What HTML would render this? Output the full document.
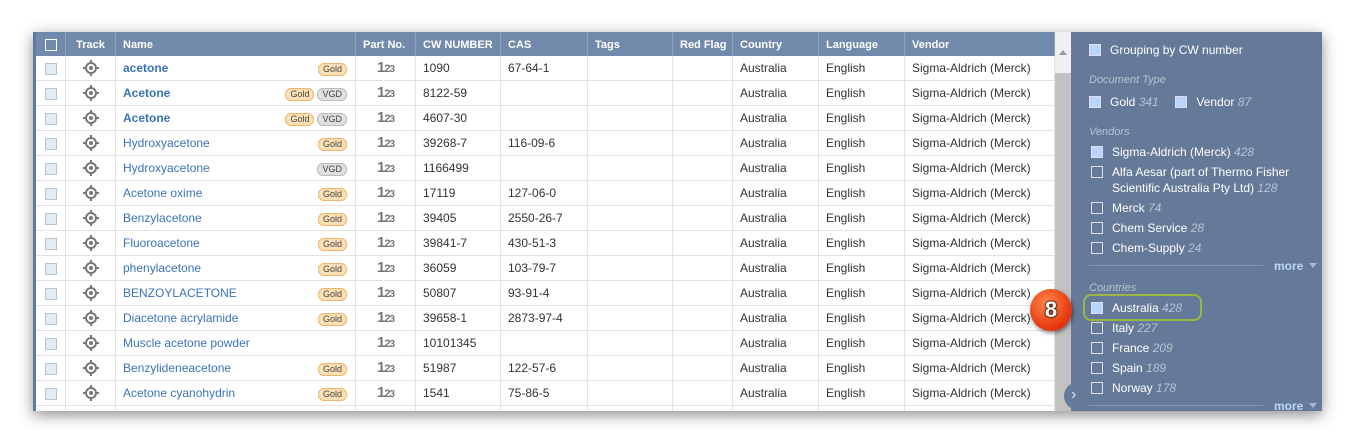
<!DOCTYPE html>
<html><head><style>
*{box-sizing:border-box;margin:0;padding:0}
body{width:1354px;height:444px;background:#fff;font-family:"Liberation Sans",Arial,sans-serif;font-size:12px;position:relative;overflow:hidden}
#wrap{position:absolute;left:33px;top:32px;width:1289px;height:379px;box-shadow:0 4px 14px rgba(0,0,0,.45);background:#fff;overflow:hidden}
#lb{position:absolute;left:0;top:0;width:3px;height:379px;background:#5f7aa3}
table{position:absolute;left:3px;top:0;border-collapse:separate;border-spacing:0;table-layout:fixed;width:1019px}
th{background:#7189aa;color:#fff;font-weight:bold;font-size:11px;height:24px;text-align:left;padding-left:7px;border-right:1px solid #8da1be;white-space:nowrap;padding-top:1px}
td{height:25px;border-right:1px solid #e2e2e2;border-bottom:1px solid #e2e2e2;color:#333;padding:0 0 0 7px;white-space:nowrap;font-size:12px;position:relative;line-height:14px}
.cb{display:inline-block;width:12px;height:12px;border:1px solid #b8c4d0;background:#e4ecf3;vertical-align:middle}
th .cb{border-color:#fff;background:transparent}
.c{text-align:center;padding-left:0}
.nm{color:#3b73b8}
.b{font-weight:bold}
.badges{position:absolute;right:8px;top:5px}
.g,.v{display:inline-block;font-size:9px;line-height:11px;padding:0 4px;border-radius:6px;margin-left:3px}
.g{background:#fde0b5;border:1px solid #f0b56a;color:#444}
.v{background:#e0e0e0;border:1px solid #bbb;color:#444}
.pn{font-weight:bold;color:#777;font-size:15px;letter-spacing:-1px;padding-top:2px}
.pn small{font-size:11px}
#sb{position:absolute;left:1022px;top:0;width:16px;height:379px;background:#c2c2c2}
#sb .tr{position:absolute;left:0;top:0;width:16px;height:41px;background:#f0f0f0}
#sb .tr:after{content:"";position:absolute;left:4px;top:18px;border:4px solid transparent;border-bottom:5px solid #999;border-top:0}
#side{position:absolute;left:1038px;top:0;width:251px;height:379px;background:#647a98;color:#fff;font-size:12px}
.si{position:absolute;left:18px;white-space:nowrap}
.si .cb{width:12px;height:12px;border:1px solid #dde;background:transparent;margin-right:9px;vertical-align:-2px}
.si .cb.on{background:#b9d5fb}
.hd{color:#b7c3d4;font-style:italic;font-size:11px}
.n{color:#b7c3d4;font-style:italic}
.hr{position:absolute;left:18px;width:174px;border-top:1px solid #8195b1}
.more{position:absolute;left:203px;color:#bcd6f5;font-weight:bold;font-size:12px}
.more:after{content:"";display:inline-block;margin-left:6px;border:4px solid transparent;border-top:5px solid #a8b9cf;vertical-align:-2px}
</style></head><body>
<div id="wrap">
<div id="lb"></div>
<table>
<colgroup><col style="width:30px"><col style="width:50px"><col style="width:240px"><col style="width:60px"><col style="width:85px"><col style="width:87px"><col style="width:85px"><col style="width:60px"><col style="width:86px"><col style="width:86px"><col style="width:150px"></colgroup>
<tr><th class="c"><span class="cb"></span></th><th class="c">Track</th><th>Name</th><th>Part No.</th><th>CW NUMBER</th><th>CAS</th><th>Tags</th><th>Red Flag</th><th>Country</th><th>Language</th><th>Vendor</th></tr>
</table>
<div id="sb"><div class="tr"></div></div>
<div id="side">
<div class="si" style="top:11px;font-size:12px"><span class="cb on"></span>Grouping by CW number</div>
<div class="si hd" style="top:42px">Document Type</div>
<div class="si" style="top:63px"><span class="cb on"></span>Gold <span class="n">341</span> &nbsp;&nbsp;&nbsp; <span class="cb on"></span>Vendor <span class="n">87</span></div>
<div class="si hd" style="top:94px">Vendors</div>
<div class="si" style="top:113px;left:20px"><span class="cb on"></span>Sigma-Aldrich (Merck) <span class="n">428</span></div>
<div class="si" style="top:133px;left:20px"><span class="cb"></span>Alfa Aesar (part of Thermo Fisher</div>
<div class="si" style="top:149px;left:41px">Scientific Australia Pty Ltd) <span class="n">128</span></div>
<div class="si" style="top:169px;left:20px"><span class="cb"></span>Merck <span class="n">74</span></div>
<div class="si" style="top:189px;left:20px"><span class="cb"></span>Chem Service <span class="n">28</span></div>
<div class="si" style="top:209px;left:20px"><span class="cb"></span>Chem-Supply <span class="n">24</span></div>
<div class="hr" style="top:233px"></div><div class="more" style="top:227px">more</div>
<div class="si hd" style="top:250px">Countries</div>
<div style="position:absolute;left:12px;top:262px;width:119px;height:27px;border:2px solid #98b843;border-radius:8px"></div>
<div class="si" style="top:269px;left:20px"><span class="cb on"></span>Australia <span class="n">428</span></div>
<div class="si" style="top:289px;left:20px"><span class="cb"></span>Italy <span class="n">227</span></div>
<div class="si" style="top:309px;left:20px"><span class="cb"></span>France <span class="n">209</span></div>
<div class="si" style="top:329px;left:20px"><span class="cb"></span>Spain <span class="n">189</span></div>
<div class="si" style="top:349px;left:20px"><span class="cb"></span>Norway <span class="n">178</span></div>
<div class="hr" style="top:373px"></div><div class="more" style="top:367px">more</div>
</div>
<div style="position:absolute;left:1031px;top:350px;width:20px;height:28px;border-radius:14px 0 0 14px;background:#647a98;color:#dfe6f0;font-size:16px;line-height:26px;padding-left:7px">›</div>
<div style="position:absolute;left:997px;top:257px;width:42px;height:42px;border-radius:50%;background:radial-gradient(circle at 40% 35%,#ff8a4a,#e8380f 65%,#c52a08);box-shadow:1px 2px 4px rgba(0,0,0,.5);color:#fff;font-weight:bold;font-size:22px;text-align:center;line-height:42px;text-shadow:0 0 2px #000,0 0 2px #000">8</div>
</div>
<script>
const rows=[["acetone",1,["g"],"1090","67-64-1"],["Acetone",1,["g","v"],"8122-59",""],["Acetone",1,["g","v"],"4607-30",""],["Hydroxyacetone",0,["g"],"39268-7","116-09-6"],["Hydroxyacetone",0,["v"],"1166499",""],["Acetone oxime",0,["g"],"17119","127-06-0"],["Benzylacetone",0,["g"],"39405","2550-26-7"],["Fluoroacetone",0,["g"],"39841-7","430-51-3"],["phenylacetone",0,["g"],"36059","103-79-7"],["BENZOYLACETONE",0,["g"],"50807","93-91-4"],["Diacetone acrylamide",0,["g"],"39658-1","2873-97-4"],["Muscle acetone powder",0,[],"10101345",""],["Benzylideneacetone",0,["g"],"51987","122-57-6"],["Acetone cyanohydrin",0,["g"],"1541","75-86-5"],["",0,[],"",""]];
const t=document.querySelector("table");
const ic='<svg width="16" height="16" viewBox="0 0 16 16" style="vertical-align:middle"><circle cx="8" cy="8" r="5" fill="none" stroke="#777" stroke-width="2"/><circle cx="8" cy="8" r="2" fill="#777"/><path d="M8 0v3M8 13v3M0 8h3M13 8h3" stroke="#777" stroke-width="2"/></svg>';
rows.forEach(r=>{let b=r[2].map(x=>x=="g"?'<span class="g">Gold</span>':'<span class="v">VGD</span>').join("");let last=!r[0];
t.insertAdjacentHTML("beforeend",`<tr><td class="c"><span class="cb"></span></td><td class="c">${last?"":ic}</td><td><span class="nm${r[1]?" b":""}">${r[0]}</span><span class="badges">${b}</span></td><td class="c pn">${last?"":"1<small>2</small><small style='font-size:10px'>3</small>"}</td><td>${r[3]}</td><td>${r[4]}</td><td></td><td></td><td>${last?"":"Australia"}</td><td>${last?"":"English"}</td><td>${last?"":"Sigma-Aldrich (Merck)"}</td></tr>`)});
</script>
</body></html>
